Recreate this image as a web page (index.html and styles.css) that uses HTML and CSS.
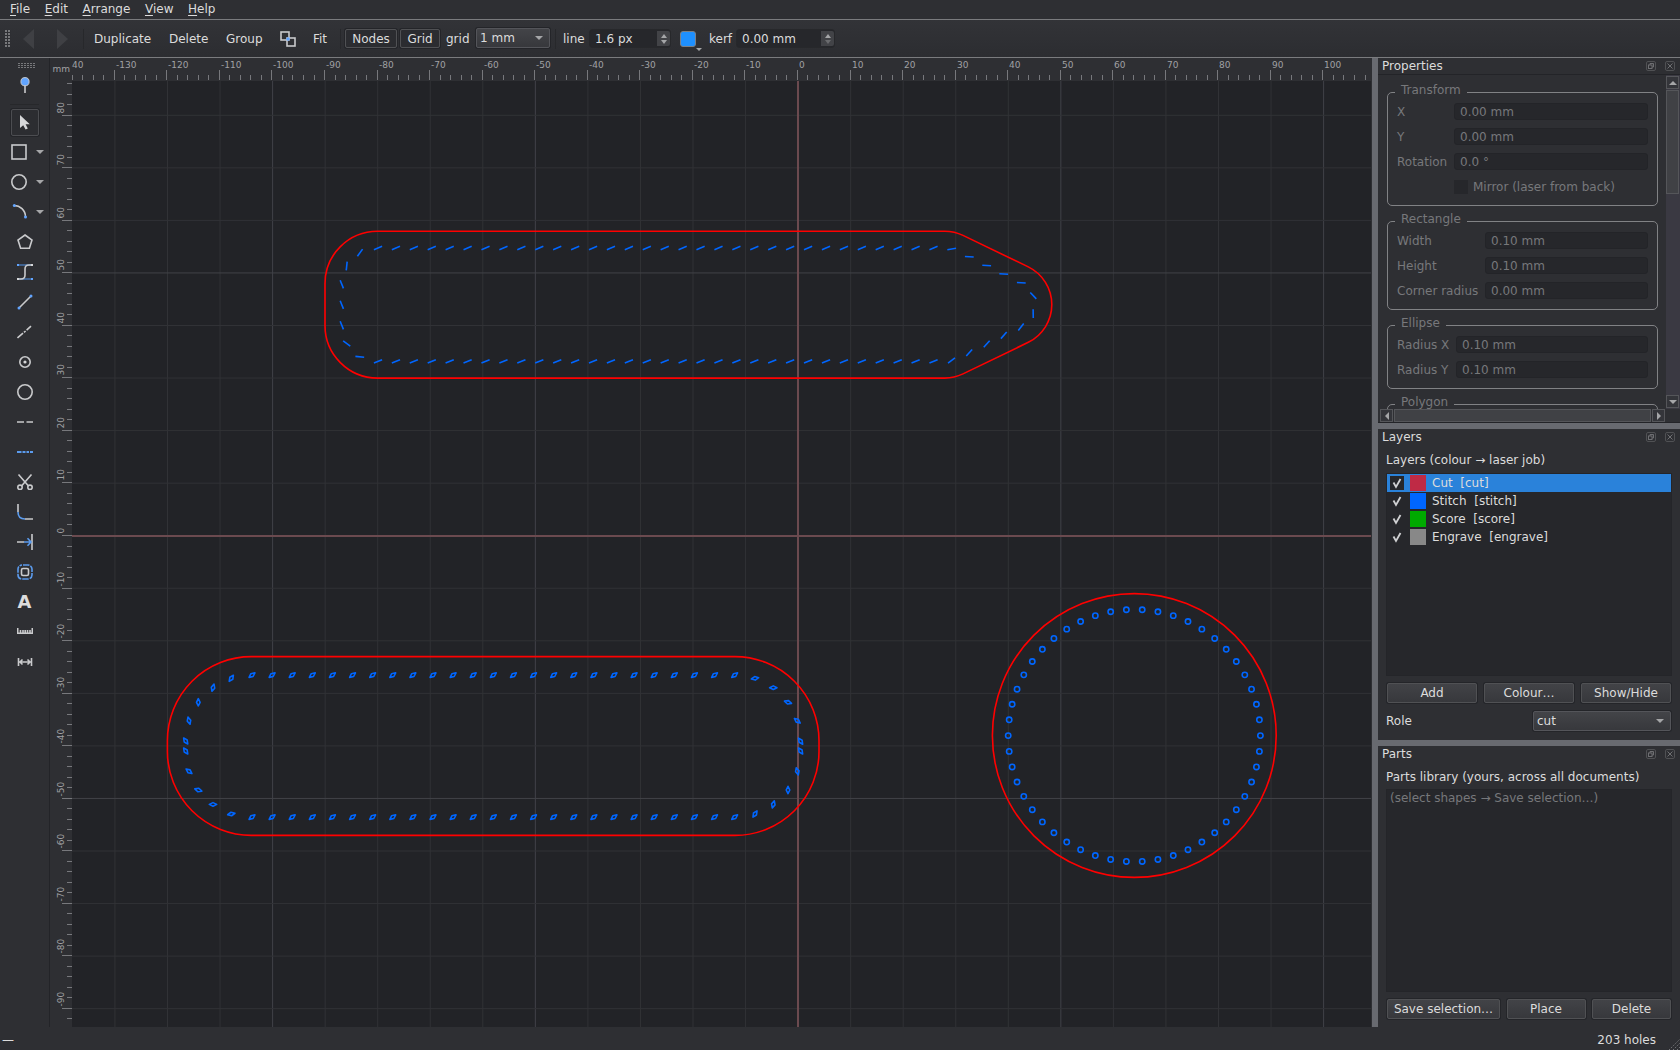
FILE: index.html
```html
<!DOCTYPE html>
<html lang="en">
<head>
    <meta charset="UTF-8">
    <title>Leather pattern editor</title>
    <link rel="stylesheet" href="styles.css">
</head>
<body>
    <nav class="menubar">
        <span><u>F</u>ile</span>
        <span><u>E</u>dit</span>
        <span><u>A</u>rrange</span>
        <span><u>V</u>iew</span>
        <span><u>H</u>elp</span>
    </nav>

    <div class="toolbar">
        <div class="grip"></div>
        <svg class="nav-arrow back" viewBox="0 0 11 20"><path d="M11 0V20L0 10z"/></svg>
        <svg class="nav-arrow" viewBox="0 0 11 20"><path d="M0 0V20L11 10z"/></svg>
        <div class="sep sep-nav"></div>
        <span class="action duplicate">Duplicate</span>
        <span class="action delete">Delete</span>
        <span class="action group-action">Group</span>
        <svg class="icon combine" viewBox="0 0 16 16"><rect x="1" y="1" width="8" height="8"/><rect x="7" y="7" width="8" height="8"/><circle class="dot" cx="8" cy="8" r="1.8"/></svg>
        <span class="action fit">Fit</span>
        <div class="sep"></div>
        <button class="toggle nodes">Nodes</button>
        <button class="toggle grid-btn">Grid</button>
        <span class="action grid-label">grid</span>
        <div class="combo grid-size"><span>1 mm</span><i class="down"></i></div>
        <div class="sep sep-grid"></div>
        <span class="action line-label">line</span>
        <div class="spin spin-line"><span>1.6 px</span><div class="updown"><i class="up"></i><i class="down"></i></div></div>
        <div class="line-colour"><i class="down"></i></div>
        <span class="action kerf-label">kerf</span>
        <div class="spin spin-kerf"><span>0.00 mm</span><div class="updown"><i class="up"></i><i class="down dim"></i></div></div>
    </div>

    <div class="main">
        <div class="tools">
            <div class="grip-h"></div>
            <div class="tool pin"><svg class="icon" viewBox="0 0 16 16"><path d="M8 7V16"/><circle class="dot ring" cx="8" cy="4.7" r="4.1"/></svg></div>
            <div class="tool-sep"></div>
            <div class="tool"><div class="active"><svg class="icon" viewBox="0 0 16 16"><path class="solid" d="M3 1V14L6.2 11.3L8.6 15.6L10.8 14.6L8.6 10.3H12.8z"/></svg></div></div>
            <div class="tool has-menu"><svg class="icon" viewBox="0 0 16 16"><rect x="1" y="1" width="14" height="14"/></svg><i class="down"></i></div>
            <div class="tool has-menu"><svg class="icon" viewBox="0 0 16 16"><circle cx="8" cy="8" r="7.2"/></svg><i class="down"></i></div>
            <div class="tool has-menu"><svg class="icon" viewBox="0 0 16 16"><path d="M3 1.5C9 1.5 14.5 6 14.5 13"/><circle class="dot" cx="3.3" cy="1.5" r="1.5"/><circle class="dot" cx="14.5" cy="13" r="1.5"/></svg><i class="down"></i></div>
            <div class="tool"><svg class="icon" viewBox="0 0 16 16"><path d="M8 1L15 6.1L12.4 14.3H3.6L1 6.1z"/></svg></div>
            <div class="tool"><svg class="icon" viewBox="0 0 16 16"><path class="blue-dim" d="M1 1H15M1 15H15"/><path d="M15 1H12Q8 1 8 5V11Q8 15 4 15H1"/><rect class="dot" x="0" y="0" width="2" height="2"/><rect class="dot" x="14" y="14" width="2" height="2"/><rect class="solid" x="14" y="0" width="2" height="2"/><rect class="solid" x="0" y="14" width="2" height="2"/></svg></div>
            <div class="tool"><svg class="icon" viewBox="0 0 16 16"><path d="M2 14L14 2"/><circle class="dot" cx="2" cy="14" r="1.5"/><circle class="dot" cx="14" cy="2" r="1.5"/></svg></div>
            <div class="tool"><svg class="icon" viewBox="0 0 16 16"><path d="M.5 14L6 9.2M7 8.4L8.6 7M9.6 6.2L14 2.2"/></svg></div>
            <div class="tool"><svg class="icon" viewBox="0 0 16 16"><circle cx="8" cy="8" r="5.2"/><circle class="solid" cx="8" cy="8" r="1.6"/></svg></div>
            <div class="tool"><svg class="icon" viewBox="0 0 16 16"><circle cx="8" cy="8" r="7.2"/></svg></div>
            <div class="tool"><svg class="icon" viewBox="0 0 16 16"><path d="M0 8H7M9.5 8H16"/></svg></div>
            <div class="tool"><svg class="icon" viewBox="0 0 16 16"><path class="blue thick" d="M0 8H4.5M5.5 8H8.500M9.500 8H12M13 8H16"/></svg></div>
            <div class="tool"><svg class="icon" viewBox="0 0 16 16"><path d="M1.5 .5L11.5 12M14.5 .5L4.5 12"/><circle cx="3" cy="13.3" r="2.2"/><circle cx="13" cy="13.3" r="2.2"/></svg></div>
            <div class="tool"><svg class="icon" viewBox="0 0 16 16"><path d="M1 0V8M8 15H16"/><path class="blue" d="M1 8Q1 15 8 15"/></svg></div>
            <div class="tool"><svg class="icon" viewBox="0 0 16 16"><path d="M0 8H7M15 0V16"/><path class="blue" d="M7 8H14M10.5 4.2L14 8L10.5 11.8"/></svg></div>
            <div class="tool"><svg class="icon" viewBox="0 0 16 16"><rect class="blue" x="1" y="1" width="14" height="14" rx="4" stroke-dasharray="6.5 1" stroke-dashoffset="-1"/><rect x="4.5" y="4.5" width="7" height="7" rx="1.5"/></svg></div>
            <div class="tool letter">A</div>
            <div class="tool"><svg class="icon" viewBox="0 0 16 16"><path d="M.7 4V9.3H15.3V4M3.5 6V9M6 6V9M8.2 6V9M10.5 6V9M13 6V9"/></svg></div>
            <div class="tool"><svg class="icon" viewBox="0 0 16 16"><path d="M1.5 4V12M14.500 4V12M2 8H14M5.500 5.500L3 8L5.500 10.500M10.500 5.500L13 8L10.500 10.500"/></svg></div>
        </div>

        <svg class="canvas" id="canvas" viewBox="50 58 1321 969">
            <rect class="ruler-bg" x="50" y="58" width="1321" height="969"/>
            <rect class="sheet" x="72" y="81" width="1299" height="946"/>
            <g id="grid"></g>
            <g id="ticks"></g>
            <text class="ruler-text" x="52.5" y="72">mm</text>
            <g class="cut">
                <path d="M377.500 231.200H944.800A42 42 0 0 1 963 235.400L1028.300 266.900A42 42 0 0 1 1028.300 342.300L963 373.900A42 42 0 0 1 944.800 378.100H377.500A52.500 52.500 0 0 1 325 325.500V283.700A52.500 52.500 0 0 1 377.500 231.200z"/>
                <rect x="167.400" y="656.600" width="651.600" height="178.800" rx="84"/>
                <circle cx="1134.300" cy="735.500" r="141.900"/>
            </g>
            <g class="stitch" id="stitches"></g>
        </svg>

        <div class="docks">
            <section class="dock properties">
                <header><span>Properties</span><svg class="dock-btn" viewBox="0 0 10 10"><rect class="frame" x=".5" y=".5" width="9" height="9" rx="1.5"/><path d="M4 4V2.5H7.5V6H6"/><rect x="2.5" y="4" width="3.5" height="3.5"/></svg><svg class="dock-btn" viewBox="0 0 10 10"><rect class="frame" x=".5" y=".5" width="9" height="9" rx="1.5"/><path d="M2.5 2.5L7.5 7.5M7.5 2.5L2.5 7.5"/></svg></header>
                <div class="scroll-area">
                    <div class="groups">
                        <div class="group transform">
                            <div class="legend">Transform</div>
                            <div class="row"><label>X</label><div class="field">0.00 mm</div></div>
                            <div class="row"><label>Y</label><div class="field">0.00 mm</div></div>
                            <div class="row"><label>Rotation</label><div class="field">0.0 °</div></div>
                            <div class="row"><label></label><div class="check"></div><span>Mirror (laser from back)</span></div>
                        </div>
                        <div class="group rectangle">
                            <div class="legend">Rectangle</div>
                            <div class="row"><label>Width</label><div class="field">0.10 mm</div></div>
                            <div class="row"><label>Height</label><div class="field">0.10 mm</div></div>
                            <div class="row"><label>Corner radius</label><div class="field">0.00 mm</div></div>
                        </div>
                        <div class="group ellipse">
                            <div class="legend">Ellipse</div>
                            <div class="row"><label>Radius X</label><div class="field">0.10 mm</div></div>
                            <div class="row"><label>Radius Y</label><div class="field">0.10 mm</div></div>
                        </div>
                        <div class="group polygon">
                            <div class="legend">Polygon</div>
                        </div>
                    </div>
                    <div class="vscroll">
                        <div class="sbtn"><i class="up"></i></div>
                        <div class="thumb"></div>
                        <div class="sbtn"><i class="down"></i></div>
                    </div>
                </div>
                <div class="hscroll">
                    <div class="sbtn"><i class="left"></i></div>
                    <div class="thumb"></div>
                    <div class="sbtn"><i class="right"></i></div>
                </div>
            </section>

            <section class="dock layers">
                <header><span>Layers</span><svg class="dock-btn" viewBox="0 0 10 10"><rect class="frame" x=".5" y=".5" width="9" height="9" rx="1.5"/><path d="M4 4V2.5H7.5V6H6"/><rect x="2.5" y="4" width="3.5" height="3.5"/></svg><svg class="dock-btn" viewBox="0 0 10 10"><rect class="frame" x=".5" y=".5" width="9" height="9" rx="1.5"/><path d="M2.5 2.5L7.5 7.5M7.5 2.5L2.5 7.5"/></svg></header>
                <p class="caption">Layers (colour → laser job)</p>
                <ul class="list">
                    <li class="selected"><svg class="tick" viewBox="0 0 14 14"><path d="M3.5 6.5L6 11L10.5 3"/></svg><b class="swatch red"></b>Cut&nbsp; [cut]</li>
                    <li><svg class="tick" viewBox="0 0 14 14"><path d="M3.5 6.5L6 11L10.5 3"/></svg><b class="swatch blue"></b>Stitch&nbsp; [stitch]</li>
                    <li><svg class="tick" viewBox="0 0 14 14"><path d="M3.5 6.5L6 11L10.5 3"/></svg><b class="swatch green"></b>Score&nbsp; [score]</li>
                    <li><svg class="tick" viewBox="0 0 14 14"><path d="M3.5 6.5L6 11L10.5 3"/></svg><b class="swatch grey"></b>Engrave&nbsp; [engrave]</li>
                </ul>
                <div class="buttons">
                    <button>Add</button>
                    <button>Colour…</button>
                    <button>Show/Hide</button>
                </div>
                <div class="role"><span>Role</span><div class="combo"><span>cut</span><i class="down"></i></div></div>
            </section>

            <section class="dock parts">
                <header><span>Parts</span><svg class="dock-btn" viewBox="0 0 10 10"><rect class="frame" x=".5" y=".5" width="9" height="9" rx="1.5"/><path d="M4 4V2.5H7.5V6H6"/><rect x="2.5" y="4" width="3.5" height="3.5"/></svg><svg class="dock-btn" viewBox="0 0 10 10"><rect class="frame" x=".5" y=".5" width="9" height="9" rx="1.5"/><path d="M2.5 2.5L7.5 7.5M7.5 2.5L2.5 7.5"/></svg></header>
                <p class="caption">Parts library (yours, across all documents)</p>
                <ul class="list"><li class="empty">(select shapes → Save selection…)</li></ul>
                <div class="buttons">
                    <button class="save">Save selection…</button>
                    <button class="place">Place</button>
                    <button class="remove">Delete</button>
                </div>
            </section>
        </div>
    </div>

    <footer class="statusbar">
        <span>—</span>
        <span class="holes">203 holes</span>
        <svg class="size-grip" viewBox="0 0 12 12"><path d="M1 12L12 1M5 12L12 5M9 12L12 9"/></svg>
    </footer>

    <script>
        const NS = 'http://www.w3.org/2000/svg';
        const OX = 798.1, OY = 535.7, PX = 5.255; // origin and pixels per mm

        function add(parent, tag, attrs, text) {
            const el = document.createElementNS(NS, tag);
            for (const key in attrs) el.setAttribute(key, attrs[key]);
            if (text !== undefined) el.textContent = text;
            document.getElementById(parent).appendChild(el);
        }

        function line(parent, cls, x1, y1, x2, y2) {
            add(parent, 'line', { class: cls, x1, y1, x2, y2 });
        }

        // grid, then the two axes on top of it
        for (let mm = -130; mm <= 100; mm += 10) {
            const x = OX + mm * PX;
            if (mm) line('grid', mm % 50 ? 'minor' : 'major', x, 81, x, 1027);
        }
        for (let mm = -90; mm <= 80; mm += 10) {
            const y = OY - mm * PX;
            if (mm) line('grid', mm % 50 ? 'minor' : 'major', 72, y, 1371, y);
        }
        line('grid', 'axis', 72, 536, 1371, 536);
        line('grid', 'axis', 798, 81, 798, 1027);

        // rulers, ticks snapped to whole pixels
        for (let mm = -138; mm <= 108; mm += 2) {
            const x = Math.floor(OX - 0.64 + mm * PX) + 0.5;
            line('ticks', 'tick-mark', x, mm % 10 ? 75 : 70, x, 80);
            if (mm % 10 === 0) add('ticks', 'text', { class: 'ruler-text', x: x + 1.5, y: 68 }, mm);
        }
        add('ticks', 'text', { class: 'ruler-text', x: 72, y: 68 }, '40');
        for (let mm = -92; mm <= 86; mm += 2) {
            const y = Math.floor(OY - 0.2 - mm * PX) + 0.5;
            line('ticks', 'tick-mark', mm % 10 ? 67 : 62, y, 72, y);
            if (mm % 10 === 0) add('ticks', 'text', { class: 'ruler-text', transform: `translate(64 ${y - 2}) rotate(-90)` }, mm);
        }

        // slanted slits along the strap
        const slits = [
            [951.7, 249, -9], [969.3, 256.8, 3], [986.7, 265.5, 3], [1003.7, 274, 3], [1021.3, 282.7, 3],
            [1033.3, 295.7, 47], [1033.2, 313.7, 89], [1021, 327, -52], [1003.8, 335.3, -49], [986.7, 344, -48],
            [969.2, 352.7, -48], [951.5, 360.5, -38],
            [360, 252.7, -54], [346.7, 266, -84], [341.8, 284.3, 68], [341.8, 304.8, 68], [341.8, 325.3, 68],
            [346.7, 343.5, 36], [359.8, 356.8, 6]
        ];
        for (let i = 0; i < 32; i++) {
            slits.push([378 + i * 17.92, 248, -22], [378 + i * 17.92, 361.4, -22]);
        }
        slits.forEach(([x, y, a]) => {
            add('stitches', 'path', { d: 'M-4.4 0H4.4', transform: `translate(${x} ${y}) rotate(${a})` });
        });

        // diamond holes
        const diamonds = [
            [231.3, 678.3, -56], [213, 687.7, -74], [198.3, 702.3, 90], [189, 720.7, 74], [185.7, 741, 56],
            [185.7, 751, 56], [189, 771.3, 38], [198.3, 790, 18], [213, 804.4, 0], [231.3, 814, -10],
            [755, 678.3, -10], [773.3, 687.7, 0], [788, 702.3, 18], [797.3, 720.7, 38], [800.6, 741.2, 56],
            [800.6, 751, 56], [797.3, 771.3, 74], [788, 790, 90], [773.3, 804.4, -74], [755, 814, -57]
        ];
        for (let i = 0; i < 25; i++) {
            diamonds.push([252 + i * 20.11, 675.1, -38], [252 + i * 20.11, 817.1, -38]);
        }
        diamonds.forEach(([x, y, a]) => {
            add('stitches', 'path', { d: 'M-3.7 0L0 -1.8L3.7 0L0 1.8z', transform: `translate(${x} ${y}) rotate(${a})` });
        });

        // round holes
        for (let i = 0; i < 50; i++) {
            const a = i * Math.PI / 25;
            add('stitches', 'circle', { cx: 1134.3 + 126.1 * Math.cos(a), cy: 735.6 + 126.1 * Math.sin(a), r: 2.65 });
        }
    </script>
</body>
</html>
```
FILE: styles.css
```css
* {
    box-sizing: border-box;
}
body {
    margin: 0;
    width: 1680px;
    height: 1050px;
    overflow: hidden;
    display: flex;
    flex-direction: column;
    background: #2e2f33;
    color: #dcdcdc;
    font: 12px/14px "DejaVu Sans", sans-serif;
    white-space: nowrap;
}
svg {
    display: block;
    flex: none;
}
button {
    font: inherit;
    color: inherit;
    padding: 0;
    border: 1px solid #505154;
    border-radius: 2px;
    background: linear-gradient(#424347, #37383c);
    box-shadow: 0 0 0 1px #242529;
}

/* small triangles */
.up, .down, .left, .right {
    flex: none;
    width: 0;
    height: 0;
    border: 4px solid transparent;
}
.down {
    border-top-color: #a5a6a8;
    border-bottom: 0;
}
.up {
    border-bottom-color: #a5a6a8;
    border-top: 0;
}
.left {
    border-right-color: #a5a6a8;
    border-left: 0;
}
.right {
    border-left-color: #a5a6a8;
    border-right: 0;
}

.menubar {
    height: 20px;
    flex: none;
    display: flex;
    gap: 14.6px;
    padding: 2px 0 0 10px;
    border-bottom: 1px solid #7a7b7e;
}
.menubar u {
    text-underline-offset: 2px;
}

.toolbar {
    height: 38px;
    flex: none;
    display: flex;
    align-items: center;
    border-bottom: 1px solid #7a7b7e;
    background: linear-gradient(#323337, #2c2d31);
}
.grip {
    width: 6px;
    height: 17px;
    margin-left: 5px;
    background: repeating-linear-gradient(#0000 0 2px, #2e2f33 2px 3px), repeating-linear-gradient(90deg, #77787b 0 2px, #2e2f33 2px 3px);
}
.nav-arrow {
    width: 11px;
    height: 20px;
    margin-left: 23px;
    fill: #3f4044;
}
.nav-arrow.back {
    margin-left: 12px;
}
.sep {
    width: 1px;
    height: 20px;
    margin-left: 13px;
    background: #27282b;
}
.sep-nav {
    margin-left: 15px;
}
.sep-grid {
    margin-left: 5px;
}
.action {
    width: 57px;
}
.duplicate {
    margin-left: 10px;
}
.delete {
    margin-left: 18px;
    width: 39px;
}
.group-action {
    margin-left: 18px;
    width: 36px;
}
.combine {
    margin-left: 18px;
}
.fit {
    margin-left: 17px;
    width: 14px;
}
.toggle {
    width: 52px;
    height: 19px;
    margin-left: 4px;
    background: #2b2c30;
}
.grid-btn {
    width: 40px;
    margin-left: 3px;
}
.grid-label {
    margin-left: 6px;
    width: 23px;
}
.combo {
    display: flex;
    align-items: center;
    justify-content: space-between;
    height: 20px;
    padding: 0 6px 1px 3px;
    border: 1px solid #54555a;
    border-radius: 2px;
    background: linear-gradient(#434448, #37383c);
    box-shadow: 0 0 0 1px #242529;
}
.grid-size {
    width: 74px;
    margin: 0 0 1px 7px;
}
.line-label {
    margin-left: 7px;
    width: 21px;
}
.spin {
    display: flex;
    align-items: center;
    justify-content: space-between;
    height: 17px;
    padding-left: 5px;
    border-radius: 3px;
    background: #26272b;
    box-shadow: 0 0 0 1px #27282b;
}
.spin-line {
    width: 80px;
    margin-left: 6px;
}
.spin-kerf {
    width: 97px;
    margin-left: 5px;
}
.updown {
    width: 13px;
    height: 15px;
    display: flex;
    flex-direction: column;
    align-items: center;
    justify-content: center;
    gap: 2px;
    border-radius: 0 2px 2px 0;
    background: #424347;
}
.updown i {
    border-left-width: 3px;
    border-right-width: 3px;
}
.updown .dim {
    border-top-color: #6a6b6e;
}
.line-colour {
    width: 16px;
    height: 16px;
    margin-left: 10px;
    border: 1px solid #7b7f85;
    border-radius: 3px;
    background: #1e90ff;
}
.line-colour .down {
    display: block;
    margin: 16px 0 0 15px;
    border-width: 3px 3px 0;
}
.kerf-label {
    margin-left: 13px;
    width: 23px;
}

.main {
    height: 969px;
    flex: none;
    display: flex;
}
.tools {
    width: 50px;
    flex: none;
    border-right: 1px solid #232428;
}
.grip-h {
    width: 17px;
    height: 6px;
    margin: 5px 0 0 18px;
    background: repeating-linear-gradient(#0000 0 1px, #2e2f33 1px 2px), repeating-linear-gradient(90deg, #77787b 0 2px, #2e2f33 2px 3px);
}
.tool {
    height: 30px;
    display: flex;
    align-items: center;
    justify-content: center;
}
.pin {
    margin-top: 1px;
}
.tool-sep {
    height: 1px;
    margin: 4px 10px 2px;
    background: #27282b;
}
.active {
    width: 28px;
    height: 27px;
    display: flex;
    align-items: center;
    justify-content: center;
    border: 1px solid #4c4d51;
    border-radius: 2px;
    background: #2c2d31;
    box-shadow: 0 0 0 1px #242529;
}
.has-menu {
    justify-content: flex-start;
    gap: 9px;
    padding-left: 11px;
}
.letter {
    font-weight: bold;
    font-size: 18px;
}
.icon {
    width: 16px;
    height: 16px;
    fill: none;
    stroke: #c9cacc;
    stroke-width: 1.6;
}
.icon .dot {
    fill: #61a4ff;
    stroke: none;
}
.icon .ring {
    stroke: #c9cacc;
    stroke-width: 1;
}
.icon .solid {
    fill: #d6d7d9;
    stroke: none;
}
.icon .blue {
    stroke: #5b9bed;
}
.icon .thick {
    stroke-width: 2;
}
.icon .blue-dim {
    stroke: #4674b0;
}

.canvas {
    width: 1321px;
    height: 969px;
}
.ruler-bg {
    fill: #2e2f33;
}
.sheet {
    fill: #222327;
}
.minor {
    stroke: #313236;
}
.major {
    stroke: #414248;
}
.axis {
    stroke: #6b4a4f;
    stroke-width: 2;
}
.tick-mark {
    stroke: #77787c;
}
.ruler-text {
    fill: #a0a1a4;
    font-size: 9px;
}
.cut {
    fill: none;
    stroke: #ff0000;
    stroke-width: 1.6;
}
.stitch {
    fill: none;
    stroke: #0066ff;
    stroke-width: 1.6;
    stroke-linejoin: round;
}

.docks {
    width: 309px;
    flex: none;
    padding-left: 6px;
    border-left: 1px solid #2e2f33;
    background: #686a70;
    display: flex;
    flex-direction: column;
    gap: 6px;
}
.dock {
    background: #2e2f33;
    overflow: hidden;
}
.dock header {
    height: 17px;
    display: flex;
    align-items: center;
    padding: 0 5px 1px 4px;
    gap: 9px;
}
.dock header span {
    flex: 1;
}
.dock-btn {
    width: 10px;
    height: 10px;
    fill: none;
    stroke: #6e6f72;
}
.dock-btn .frame {
    stroke: #505154;
}
.properties {
    height: 365px;
}
.properties header {
    border-bottom: 1px solid #232428;
}
.scroll-area {
    height: 334px;
    display: flex;
    overflow: hidden;
}
.groups {
    width: 288px;
    padding: 17px 8px 0 9px;
    color: #77787b;
}
.group {
    border: 1px solid #818285;
    border-radius: 5px;
    padding: 0 9px;
    margin-bottom: 15px;
}
.transform {
    height: 114px;
}
.rectangle {
    height: 89px;
}
.ellipse {
    height: 64px;
}
.polygon {
    height: 90px;
}
.legend {
    width: max-content;
    height: 14px;
    margin: -10px 0 6px -2px;
    padding: 0 6px;
    background: #2e2f33;
}
.row {
    display: flex;
    align-items: center;
    height: 17px;
    margin-bottom: 8px;
}
.row label {
    width: 57px;
    flex: none;
}
.rectangle label {
    width: 88px;
}
.ellipse label {
    width: 59px;
}
.field {
    flex: 1;
    height: 17px;
    padding: 1px 5px;
    border: 1px solid #232428;
    border-radius: 3px;
    background: #26272b;
    line-height: 14px;
}
.check {
    width: 14px;
    height: 14px;
    margin-right: 5px;
    background: #26272b;
}
.vscroll {
    width: 14px;
    display: flex;
    flex-direction: column;
    padding: 1px 1px 0 0;
    background: #3a3942;
}
.sbtn {
    width: 13px;
    height: 13px;
    flex: none;
    display: flex;
    align-items: center;
    justify-content: center;
    border: 1px solid #55565a;
    background: #34353a;
}
.thumb {
    border: 1px solid #55565a;
    background: #404145;
}
.vscroll .thumb {
    height: 104px;
    margin: 1px 0 201px;
}
.hscroll {
    display: flex;
    height: 14px;
    padding-left: 2px;
    border-bottom: 1px solid #232428;
}
.hscroll .thumb {
    width: 257px;
    margin: 0 1px;
}
.layers {
    height: 311px;
}
.parts {
    flex: 1;
}
.caption {
    margin: 6px 0 0 8px;
    height: 20px;
    line-height: 16px;
}
.parts .caption {
    height: 19px;
}
.list {
    list-style: none;
    height: 203px;
    margin: 1px 8px 0;
    padding: 0;
    border: 1px solid #242529;
    background: #26272b;
}
.list li {
    display: flex;
    align-items: center;
    height: 18px;
    padding-left: 3px;
}
.list .selected {
    background: #2a82da;
}
.list .empty {
    color: #77787b;
    height: 15px;
}
.tick {
    width: 14px;
    height: 14px;
    fill: none;
    stroke: #d0d1d3;
    stroke-width: 1.8;
    background: #26272b;
}
.swatch {
    width: 16px;
    height: 16px;
    margin: 0 6px;
}
.red {
    background: #bf2a45;
}
.swatch.blue {
    background: #0066ff;
}
.green {
    background: #00aa00;
}
.grey {
    background: #888888;
}
.buttons {
    display: flex;
    justify-content: space-between;
    margin: 7px 9px 0;
}
.buttons button {
    width: 90px;
    height: 20px;
}
.buttons .save {
    width: 113px;
}
.buttons .place, .buttons .remove {
    width: 79px;
}
.role {
    display: flex;
    align-items: center;
    justify-content: space-between;
    margin: 8px 9px 0 8px;
}
.role .combo {
    width: 138px;
}

.statusbar {
    height: 23px;
    flex: none;
    display: flex;
    align-items: center;
    padding: 2px 0 0 2px;
}
.holes {
    margin-left: auto;
    margin-right: 12px;
}
.size-grip {
    width: 12px;
    height: 12px;
    align-self: flex-end;
    stroke: #77787b;
    stroke-dasharray: 1.5 1.5;
}
```
